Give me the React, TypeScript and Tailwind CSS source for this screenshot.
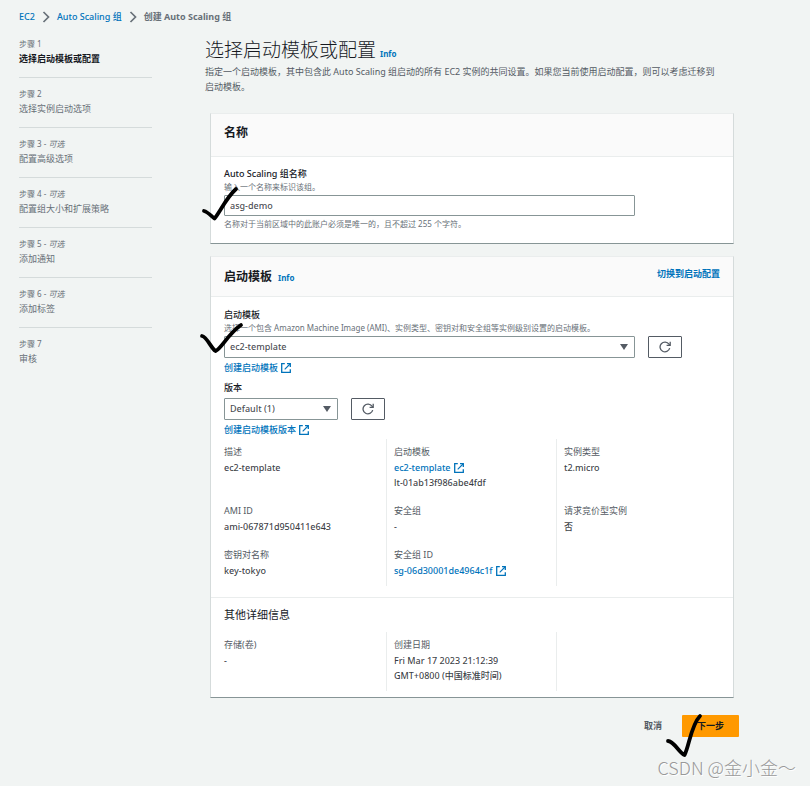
import React, { useState } from 'react'

const steps = [
  { title: '选择启动模板或配置', optional: false },
  { title: '选择实例启动选项', optional: false },
  { title: '配置高级选项', optional: true },
  { title: '配置组大小和扩展策略', optional: true },
  { title: '添加通知', optional: true },
  { title: '添加标签', optional: true },
  { title: '审核', optional: false },
]

function ChevronIcon() {
  return (
    <svg className="w-2 h-3 flex-shrink-0" viewBox="0 0 8 12" fill="none" stroke="#687078" strokeWidth="1.7">
      <path d="M1.5 1 6.5 6 1.5 11" />
    </svg>
  )
}

function ExternalIcon() {
  return (
    <svg className="w-[10px] h-[10px] flex-shrink-0" viewBox="0 0 10 10" fill="none" stroke="#0073bb" strokeWidth="1.3">
      <path d="M3.800.700H.700v8.600h8.600V6.200" />
      <path d="M6 .700h3.300V4" />
      <path d="M9 1 3.700 6.300" strokeWidth="1.1" />
    </svg>
  )
}

function RefreshButton() {
  return (
    <button
      aria-label="刷新"
      className="w-[34px] h-[22px] flex items-center justify-center bg-white border border-[#545b64] rounded-[1px] hover:bg-gray-50"
    >
      <svg className="w-3 h-3" viewBox="0 0 12 12" fill="none" stroke="#545b64" strokeWidth="1.3">
        <path d="M10.700 7.200A4.900 4.900 0 1 1 10 3.200L10.800 4.200" />
        <path d="M11.200.800v3.600H7.600" />
      </svg>
    </button>
  )
}

// Handwritten tick drawn over a control
function Tick({ className, d, viewBox }: { className: string; d: string; viewBox: string }) {
  return (
    <svg
      className={`absolute pointer-events-none ${className}`}
      viewBox={viewBox}
      fill="none"
      stroke="#000"
      strokeWidth="3.8"
      strokeLinecap="round"
      strokeLinejoin="round"
    >
      <path d={d} />
    </svg>
  )
}

function SelectBox({ id, value, className }: { id: string; value: string; className: string }) {
  return (
    <div className={`relative ${className}`}>
      <select
        id={id}
        className="block w-full h-[22px] pl-[5px] pr-5 bg-white border border-[#879596] rounded-[1px] appearance-none font-medium text-[#16191f]/80"
      >
        <option>{value}</option>
      </select>
      <svg className="absolute right-[7px] top-2 w-2 h-[6px] pointer-events-none" viewBox="0 0 8 6" fill="#545b64">
        <path d="M0 0h8L4 6z" />
      </svg>
    </div>
  )
}

function ExternalLink({ children }: { children: React.ReactNode }) {
  return (
    <a href="#" className="inline-flex items-center gap-[3px] font-medium text-[#0073bb] hover:underline">
      {children}
      <ExternalIcon />
    </a>
  )
}

function Detail({ label, children, last }: { label?: string; children?: React.ReactNode; last?: boolean }) {
  return (
    <div className={`pt-[5px] pb-2 pl-[7px] ${last ? '' : 'border-r border-[#eaeded]'}`}>
      <dt className="leading-4 text-[#545b64]">{label}</dt>
      <dd className="leading-[15px] font-medium text-[#16191f]/85">{children}</dd>
    </div>
  )
}

export default function App() {
  const [name, setName] = useState('asg-demo')

  return (
    <div className="min-h-screen bg-[#f1f4f3] pt-[9px] pb-2 text-[9px] leading-4 text-[#16191f] font-['Noto_Sans','Noto_Sans_CJK_SC',sans-serif]">
      <nav className="flex items-center gap-[7px] pl-[19px]">
        <a href="#" className="font-medium text-[#0073bb]">EC2</a>
        <ChevronIcon />
        <a href="#" className="font-medium text-[#0073bb]">Auto Scaling 组</a>
        <ChevronIcon />
        <span className="font-bold text-[#687078]">创建 Auto Scaling 组</span>
      </nav>

      <div className="flex items-start pl-[19px] pr-[71px]">
        {/* Etapas */}
        <ol className="w-[133px] flex-shrink-0 mt-[3px]">
          {steps.map((step, i) => (
            <li
              key={step.title}
              className={`pt-[9px] pb-[10px] ${i < steps.length - 1 ? 'border-b border-[#d5dbdb]' : ''}`}
            >
              <div className="text-[8px] leading-[14px] text-[#687078]">
                步骤 {i + 1}
                {step.optional && <> - <i>可选</i></>}
              </div>
              <div className={i === 0 ? 'font-bold' : 'text-[#687078]'}>{step.title}</div>
            </li>
          ))}
        </ol>

        <main className="flex-1 min-w-0 ml-[53px] pt-[11px]">
          <div className="flex items-baseline gap-1">
            <h1 className="text-[19px] leading-7 font-light">选择启动模板或配置</h1>
            <a href="#" className="text-[8px] font-bold text-[#0073bb]">Info</a>
          </div>
          <p className="leading-[15px] text-[#545b64] pr-4">
            指定一个启动模板，其中包含此 Auto Scaling 组启动的所有 EC2 实例的共同设置。如果您当前使用启动配置，则可以考虑迁移到启动模板。
          </p>

          <div className="mx-[5px] mt-[19px] flex flex-col gap-3">
            <section className="bg-white border border-[#d5dbdb] border-t-[#eaeded] border-b-[#879596]">
              <header className="h-[43px] px-[13px] pb-1 flex items-center bg-[#fafafa] border-b border-[#eaeded]">
                <h2 className="text-[12px] font-bold">名称</h2>
              </header>
              <div className="px-[13px] pt-[9px] pb-[11px]">
                <label htmlFor="asg-name" className="block leading-[15px] font-medium">Auto Scaling 组名称</label>
                <p className="mb-[2px] text-[8px] leading-3 text-[#687078]">输入一个名称来标识该组。</p>
                <div className="relative w-[411px] max-w-full">
                  <input
                    id="asg-name"
                    value={name}
                    onChange={e => setName(e.target.value)}
                    className="block w-full h-[21px] px-[5px] bg-white border border-[#879596] rounded-[1px] font-medium text-[#16191f]/80"
                  />
                  <Tick
                    className="-left-6 -top-3 w-[42px] h-[42px]"
                    viewBox="0 0 42 42"
                    d="M4 28C8 29 11 33 14.500 35.500C20 29 26 15 36 6"
                  />
                </div>
                <p className="text-[8px] text-[#687078]">名称对于当前区域中的此账户必须是唯一的，且不超过 255 个字符。</p>
              </div>
            </section>

            <section className="bg-white border border-[#d5dbdb] border-t-[#eaeded] border-b-[#879596]">
              <header className="h-10 px-[13px] flex items-center justify-between bg-[#fafafa] border-b border-[#eaeded]">
                <div className="flex items-baseline gap-[6px] pt-[2px]">
                  <h2 className="text-[12px] font-bold">启动模板</h2>
                  <a href="#" className="text-[8px] font-bold text-[#0073bb]">Info</a>
                </div>
                <a href="#" className="pb-[5px] font-bold text-[#0073bb]">切换到启动配置</a>
              </header>

              <div className="px-[13px] pt-[10px]">
                <label htmlFor="template" className="block leading-[15px] font-medium">启动模板</label>
                <p className="mb-[2px] text-[8px] leading-3 text-[#687078]">
                  选择一个包含 Amazon Machine Image (AMI)、实例类型、密钥对和安全组等实例级别设置的启动模板。
                </p>
                <div className="relative flex gap-[13px]">
                  <SelectBox id="template" value="ec2-template" className="w-[411px]" />
                  <RefreshButton />
                  <Tick
                    className="-left-7 -top-4 w-12 h-10"
                    viewBox="0 0 48 40"
                    d="M6 16C11 17 15 28 19.500 31C26 28 31 15 45 5"
                  />
                </div>
                <div className="h-5 flex items-center"><ExternalLink>创建启动模板</ExternalLink></div>
                <label htmlFor="version" className="block leading-5 font-medium">版本</label>
                <div className="flex gap-[13px]">
                  <SelectBox id="version" value="Default (1)" className="w-[114px]" />
                  <RefreshButton />
                </div>
                <div className="h-[19px] flex items-center"><ExternalLink>创建启动模板版本</ExternalLink></div>
              </div>

              <dl className="mx-[6px] mb-[11px] grid grid-cols-3">
                <Detail label="描述">ec2-template</Detail>
                <Detail label="启动模板">
                  <ExternalLink>ec2-template</ExternalLink>
                  <div>lt-01ab13f986abe4fdf</div>
                </Detail>
                <Detail label="实例类型" last>t2.micro</Detail>
                <Detail label="AMI ID">ami-067871d950411e643</Detail>
                <Detail label="安全组">-</Detail>
                <Detail label="请求竞价型实例" last>否</Detail>
                <Detail label="密钥对名称">key-tokyo</Detail>
                <Detail label="安全组 ID">
                  <ExternalLink>sg-06d30001de4964c1f</ExternalLink>
                </Detail>
              </dl>

              <div className="border-t border-[#eaeded] pt-[9px] pb-[6px]">
                <h3 className="px-[13px] text-[11px] leading-4">其他详细信息</h3>
                <dl className="mx-[6px] mt-[9px] grid grid-cols-3">
                  <Detail label="存储(卷)">-</Detail>
                  <Detail label="创建日期">
                    Fri Mar 17 2023 21:12:39
                    <br />
                    GMT+0800 (中国标准时间)
                  </Detail>
                </dl>
              </div>
            </section>
          </div>

          <div className="relative mt-[17px] flex justify-end gap-2">
            <button className="px-3 font-bold text-[#545b64]">取消</button>
            <button className="w-[57px] h-[22px] bg-[#ff9900] rounded-[1px] font-bold hover:bg-[#ec7211]">下一步</button>
            <Tick
              className="right-8 -top-1 w-11 h-12"
              viewBox="0 0 44 48"
              d="M5 30C11 30 16 42 21.500 44C26 36 28 14 37 5"
            />
          </div>
        </main>
      </div>

      <div className="mt-5 pr-[14px] text-right text-[18px] leading-5 font-light text-[#999] font-['Noto_Sans_CJK_SC',sans-serif] [text-shadow:1px_1px_0_#fff]">
        CSDN @金小金～
      </div>
    </div>
  )
}
